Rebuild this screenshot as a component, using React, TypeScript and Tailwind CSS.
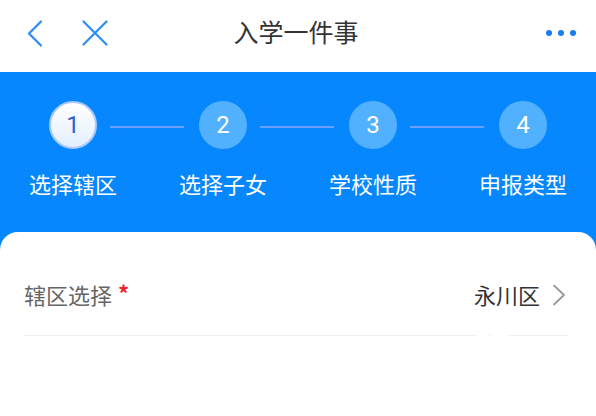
const steps = ['选择辖区', '选择子女', '学校性质', '申报类型'];

const font = { fontFamily: '"Noto Sans CJK SC", "Noto Sans", sans-serif' };

export default function App() {
  return (
    <div className="w-[596px] h-[416px] bg-white overflow-hidden" style={font}>
      {/* Nav bar */}
      <div className="h-[72px] flex items-center pl-[27px] pr-[20px] pb-[6px]">
        <svg width="16" height="27" viewBox="0 0 16 27" fill="none">
          <polyline points="14,1.5 2,13.5 14,25.5" stroke="#2b8cf7" strokeWidth="2.2" strokeLinecap="round" strokeLinejoin="round" />
        </svg>
        <svg width="26" height="26" viewBox="0 0 26 26" fill="none" className="ml-[39px]">
          <path d="M1.5 1.5 24.5 24.5 M24.5 1.5 1.5 24.5" stroke="#2b8cf7" strokeWidth="2.2" strokeLinecap="round" />
        </svg>
        <div className="flex-1 text-center text-[25px] text-[#333] pr-[62px] -mt-[2px]">入学一件事</div>
        <div className="flex items-center gap-[6px]">
          <span className="w-[6px] h-[6px] rounded-full bg-[#1a7ef0]" />
          <span className="w-[6px] h-[6px] rounded-full bg-[#1a7ef0]" />
          <span className="w-[6px] h-[6px] rounded-full bg-[#1a7ef0]" />
        </div>
      </div>

      {/* Steps */}
      <div className="bg-[#0787fd] h-[176px] pt-[29px]">
        <div className="grid grid-cols-4 ml-[-2px] mr-[-2px]">
          {steps.map((s, i) => (
            <div key={s} className="flex flex-col items-center relative">
              {i === 0 ? (
                <div className="w-[48px] h-[48px] rounded-full bg-gradient-to-b from-white to-[#e3efff] border-2 border-[#a9c9ff] flex items-center justify-center text-[24px] text-[#2f5fd0]" style={{ fontFamily: 'Roboto, sans-serif' }}>
                  1
                </div>
              ) : (
                <div className="w-[48px] h-[48px] rounded-full bg-[#52b1ff] flex items-center justify-center text-[24px] text-white" style={{ fontFamily: 'Roboto, sans-serif' }}>
                  {i + 1}
                </div>
              )}
              {i < 3 && (
                <div className="absolute top-[25px] left-[calc(50%+37px)] w-[74px] h-[2px] bg-[#6a9eff]" />
              )}
              <div className="mt-[23px] text-[22px] text-white leading-none">{s}</div>
            </div>
          ))}
        </div>
      </div>

      {/* Card */}
      <div className="bg-[#0787fd]">
        <div className="bg-white rounded-t-[18px] -mt-[16px] h-[200px] px-[24px]">
          <div className="h-[103px] flex items-center pt-[22px]">
            <span className="text-[22px] text-[#666]">辖区选择</span>
            <span className="text-[22px] text-[#f5222d] ml-[6px] -mt-[4px] font-bold">*</span>
            <div className="flex-1" />
            <span className="text-[22px] text-[#333]">永川区</span>
            <svg width="14" height="22" viewBox="0 0 14 22" fill="none" className="ml-[12px] mr-[6px]">
              <polyline points="2,1.5 12,11 2,20.5" stroke="#999" strokeWidth="1.8" strokeLinecap="round" strokeLinejoin="round" />
            </svg>
          </div>
          <div className="flex items-center h-[1px]">
            <div className="w-[453px] h-[1px] bg-[#f0f0f0]" />
            <div className="w-[2px] h-[1px] bg-[#f0f0f0] ml-[12px]" />
            <div className="w-[60px] h-[1px] bg-[#f0f0f0] ml-[17px]" />
          </div>
        </div>
      </div>
    </div>
  );
}
